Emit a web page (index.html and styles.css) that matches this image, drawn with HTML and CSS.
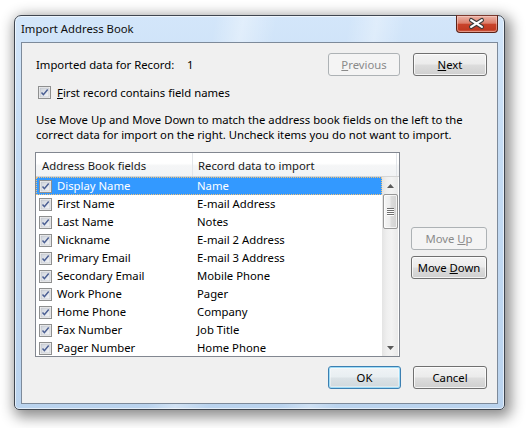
FILE: index.html
```html
<!DOCTYPE html>
<html>
<head>
<meta charset="utf-8">
<link rel="stylesheet" href="styles.css">
</head>
<body>
<svg class="defs" aria-hidden="true">
  <defs>
    <linearGradient id="cbg" x1="0" y1="0" x2="1" y2="1">
      <stop offset="0" stop-color="#cdd2da"/>
      <stop offset="1" stop-color="#f5f6f8"/>
    </linearGradient>
    <symbol id="cb" viewBox="0 0 13 13">
      <rect x="0.5" y="0.5" width="12" height="12" fill="#f6f6f6" stroke="#8e8f8f"/>
      <rect x="2" y="2" width="9" height="9" fill="url(#cbg)" stroke="#b9bdc4" stroke-width="0.6"/>
      <path d="M3.5 6.5 L5.4 8.7 L9.7 3.5" fill="none" stroke="#4b5f93" stroke-width="1.5"/>
    </symbol>
  </defs>
</svg>

<div class="window">
  <div class="titlebar">
    <span class="title">Import Address Book</span>
    <div class="close">
      <svg width="42" height="18" viewBox="0 0 42 18">
        <path d="M15.5 5 L26.5 12 M26.5 5 L15.5 12" stroke="#3b3b3b" stroke-width="4.4" stroke-linecap="round"/>
        <path d="M15.5 5 L26.5 12 M26.5 5 L15.5 12" stroke="#ffffff" stroke-width="2.2" stroke-linecap="round"/>
      </svg>
    </div>
  </div>

  <div class="client">
    <div class="row1">
      <span class="rec-label">Imported data for Record:</span>
      <span class="rec-num">1</span>
      <div class="nav-btns">
        <button class="btn btn-prev disabled"><u>P</u>revious</button>
        <button class="btn btn-next"><u>N</u>ext</button>
      </div>
    </div>

    <div class="chk-row">
      <svg class="cb" width="13" height="13"><use href="#cb"/></svg>
      <span><u>F</u>irst record contains field names</span>
    </div>

    <p class="desc">Use Move Up and Move Down to match the address book fields on the left to the<br>correct data for import on the right. Uncheck items you do not want to import.</p>

    <div class="mid">
      <div class="list">
        <div class="lhead">
          <div class="hc hc1">Address Book fields</div>
          <div class="hc hc2">Record data to import</div>
          <div class="hc hc3"></div>
        </div>
        <div class="lbody">
          <div class="rows">
            <div class="lrow selected"><div class="c1"><svg class="cb" width="13" height="13"><use href="#cb"/></svg><span>Display Name</span></div><div class="c2">Name</div></div>
            <div class="lrow"><div class="c1"><svg class="cb" width="13" height="13"><use href="#cb"/></svg><span>First Name</span></div><div class="c2">E-mail Address</div></div>
            <div class="lrow"><div class="c1"><svg class="cb" width="13" height="13"><use href="#cb"/></svg><span>Last Name</span></div><div class="c2">Notes</div></div>
            <div class="lrow"><div class="c1"><svg class="cb" width="13" height="13"><use href="#cb"/></svg><span>Nickname</span></div><div class="c2">E-mail 2 Address</div></div>
            <div class="lrow"><div class="c1"><svg class="cb" width="13" height="13"><use href="#cb"/></svg><span>Primary Email</span></div><div class="c2">E-mail 3 Address</div></div>
            <div class="lrow"><div class="c1"><svg class="cb" width="13" height="13"><use href="#cb"/></svg><span>Secondary Email</span></div><div class="c2">Mobile Phone</div></div>
            <div class="lrow"><div class="c1"><svg class="cb" width="13" height="13"><use href="#cb"/></svg><span>Work Phone</span></div><div class="c2">Pager</div></div>
            <div class="lrow"><div class="c1"><svg class="cb" width="13" height="13"><use href="#cb"/></svg><span>Home Phone</span></div><div class="c2">Company</div></div>
            <div class="lrow"><div class="c1"><svg class="cb" width="13" height="13"><use href="#cb"/></svg><span>Fax Number</span></div><div class="c2">Job Title</div></div>
            <div class="lrow"><div class="c1"><svg class="cb" width="13" height="13"><use href="#cb"/></svg><span>Pager Number</span></div><div class="c2">Home Phone</div></div>
          </div>
          <div class="vscroll">
            <div class="sb-btn">
              <svg width="7" height="4" viewBox="0 0 7 4"><path d="M0 4 L3.5 0 L7 4 Z" fill="#5a5a5a"/></svg>
            </div>
            <div class="thumb">
              <div class="grip"></div><div class="grip"></div><div class="grip"></div><div class="grip"></div>
            </div>
            <div class="sb-track"></div>
            <div class="sb-btn">
              <svg width="7" height="4" viewBox="0 0 7 4"><path d="M0 0 L7 0 L3.5 4 Z" fill="#5a5a5a"/></svg>
            </div>
          </div>
        </div>
      </div>
      <div class="move-btns">
        <button class="btn btn-move disabled">Move <u>U</u>p</button>
        <button class="btn btn-move">Move <u>D</u>own</button>
      </div>
    </div>

    <div class="footer">
      <button class="btn btn-ok default">OK</button>
      <button class="btn btn-cancel">Cancel</button>
    </div>
  </div>
</div>
</body>
</html>
```

FILE: styles.css
```css
html, body {
  margin: 0;
  padding: 0;
}

body {
  width: 529px;
  height: 428px;
  overflow: hidden;
  background: #ffffff;
  font-family: "Noto Sans", "Open Sans", sans-serif;
  font-size: 11.3px;
  line-height: 15px;
  color: #000000;
}

.defs {
  position: absolute;
  width: 0;
  height: 0;
  overflow: hidden;
}

u {
  text-decoration: underline;
  text-underline-offset: 1px;
  text-decoration-thickness: 1px;
}

/* ---------- window frame ---------- */
.window {
  box-sizing: border-box;
  width: 491px;
  height: 395px;
  margin: 15px 0 0 14px;
  border: 1px solid #3f4650;
  border-radius: 7px 7px 5px 5px;
  display: flex;
  flex-direction: column;
  background:
    linear-gradient(100deg,
      rgba(255,255,255,0) 36%,
      rgba(255,255,255,0.35) 41%,
      rgba(255,255,255,0) 47%,
      rgba(255,255,255,0) 60%,
      rgba(255,255,255,0.3) 65%,
      rgba(255,255,255,0) 70%),
    linear-gradient(#d3e6fa, #c5dcf4 35%, #bad3ee 100%);
  box-shadow:
    inset 0 0 0 1px rgba(255,255,255,0.6),
    3px 4px 14px 3px rgba(0,0,0,0.45);
}

.titlebar {
  height: 26px;
  display: flex;
  align-items: flex-start;
  flex: none;
}

.title {
  padding: 5px 0 0 6px;
  color: #0f0f0f;
  line-height: 15px;
}

.close {
  margin: -1px 6px 0 auto;
  width: 42px;
  height: 18px;
  box-sizing: border-box;
  border: 1px solid #5b2218;
  border-top-color: #7a3a30;
  border-radius: 0 0 4px 4px;
  background: linear-gradient(#ebb3a6 0%, #dc7e6b 45%, #c8432b 52%, #c13a22 85%, #d46a52 100%);
  box-shadow: inset 0 0 0 1px rgba(255,220,210,0.45);
  display: flex;
  align-items: center;
  justify-content: center;
  overflow: hidden;
}

.close svg {
  display: block;
  margin: -1px 0 0 -1px;
}

/* ---------- client area ---------- */
.client {
  flex: 1;
  margin: 0 6px 5px 6px;
  box-sizing: border-box;
  border: 1px solid #7d8a9a;
  background: #f0f0f0;
  padding: 10px 10px 14px 14px;
  display: flex;
  flex-direction: column;
}

.row1 {
  display: flex;
  align-items: center;
  height: 23px;
}

.rec-label {
  width: 151px;
}

.nav-btns {
  margin-left: auto;
  display: flex;
  gap: 13px;
}

/* ---------- buttons ---------- */
.btn {
  box-sizing: border-box;
  height: 23px;
  padding: 0;
  margin: 0;
  font-family: inherit;
  font-size: 11.3px;
  line-height: 21px;
  color: #000000;
  border: 1px solid #707070;
  border-radius: 3px;
  background: linear-gradient(#f3f3f3 0%, #ebebeb 48%, #dddddd 52%, #cfcfcf 100%);
  box-shadow: inset 0 0 0 1px rgba(255,255,255,0.75);
  text-align: center;
}

.btn.disabled {
  color: #8a8a8a;
  border-color: #adb2b5;
  background: #f4f4f4;
  box-shadow: none;
}

.btn.default {
  border-color: #3c7fb1;
  box-shadow: inset 0 0 0 1px #9fdcf7, inset 0 0 0 2px rgba(255,255,255,0.4);
  background: linear-gradient(#f0f4f6 0%, #e8eef1 48%, #dbe2e6 52%, #d0d8dc 100%);
}

.btn-prev { width: 72px; }
.btn-next { width: 74px; }
.btn-move { width: 76px; }
.btn-ok { width: 73px; }
.btn-cancel { width: 74px; }

/* ---------- checkbox row ---------- */
.chk-row {
  margin-top: 10px;
  height: 13px;
  display: flex;
  align-items: center;
  gap: 6px;
  padding-left: 2px;
}

.cb {
  display: block;
  flex: none;
}

.desc {
  margin: 13px 0 0 0;
  line-height: 15px;
}

/* ---------- list ---------- */
.mid {
  margin-top: 10px;
  display: flex;
  align-items: flex-start;
}

.list {
  box-sizing: border-box;
  width: 365px;
  height: 205px;
  margin-left: -1px;
  border: 1px solid #828790;
  background: #ffffff;
  display: flex;
  flex-direction: column;
}

.lhead {
  height: 24px;
  box-sizing: border-box;
  border-bottom: 1px solid #d5d5d5;
  display: flex;
  background: linear-gradient(#ffffff 0%, #ffffff 45%, #f5f6f7 55%, #f2f3f5 100%);
  flex: none;
}

.hc {
  box-sizing: border-box;
  height: 23px;
  padding-top: 2px;
  line-height: 22px;
  color: #1a1a1a;
  white-space: nowrap;
}

.hc1 {
  width: 157px;
  padding-left: 6px;
  border-right: 1px solid #e2e5e9;
}

.hc2 {
  width: 204px;
  padding-left: 5px;
  border-right: 1px solid #e2e5e9;
}

.hc3 {
  flex: 1;
}

.lbody {
  flex: 1;
  display: flex;
  overflow: hidden;
}

.rows {
  width: 346px;
  flex: none;
}

.lrow {
  height: 18px;
  display: flex;
  align-items: center;
  white-space: nowrap;
  box-sizing: border-box;
  padding-bottom: 1px;
}

.lrow .c1 {
  width: 156px;
  display: flex;
  align-items: center;
  gap: 5px;
  padding-left: 3px;
  box-sizing: border-box;
}

.lrow .c1 .cb {
  margin-top: 1px;
}

.lrow .c2 {
  padding-left: 5px;
}

.lrow.selected {
  background: #3399ff;
  color: #ffffff;
  outline: 1px dotted #f1c27a;
  outline-offset: -1px;
}

/* ---------- scrollbar ---------- */
.vscroll {
  width: 16px;
  flex: none;
  display: flex;
  flex-direction: column;
  background: linear-gradient(to right, #e4e4e4 0%, #efefef 30%, #f3f3f3 60%, #e9e9e9 100%);
}

.sb-btn {
  height: 17px;
  display: flex;
  align-items: center;
  justify-content: center;
  flex: none;
}

.sb-btn svg {
  display: block;
}

.sb-track {
  flex: 1;
}

.thumb {
  box-sizing: border-box;
  margin: 0 0 0 1px;
  width: 15px;
  height: 35px;
  flex: none;
  border: 1px solid #979797;
  border-radius: 2px;
  background: linear-gradient(to right, #f6f6f6 0%, #ececec 45%, #dcdcdc 55%, #d2d2d2 100%);
  box-shadow: inset 0 0 0 1px rgba(255,255,255,0.7);
  display: flex;
  flex-direction: column;
  align-items: center;
  justify-content: center;
  gap: 1px;
}

.grip {
  width: 7px;
  height: 1px;
  background: #6e6e6e;
  box-shadow: 0 1px 0 #ffffff;
}

/* ---------- side buttons ---------- */
.move-btns {
  margin-left: 11px;
  margin-top: 75px;
  display: flex;
  flex-direction: column;
  gap: 6px;
}

/* ---------- footer ---------- */
.footer {
  margin-top: 9px;
  display: flex;
  justify-content: flex-end;
  gap: 12px;
}
```
